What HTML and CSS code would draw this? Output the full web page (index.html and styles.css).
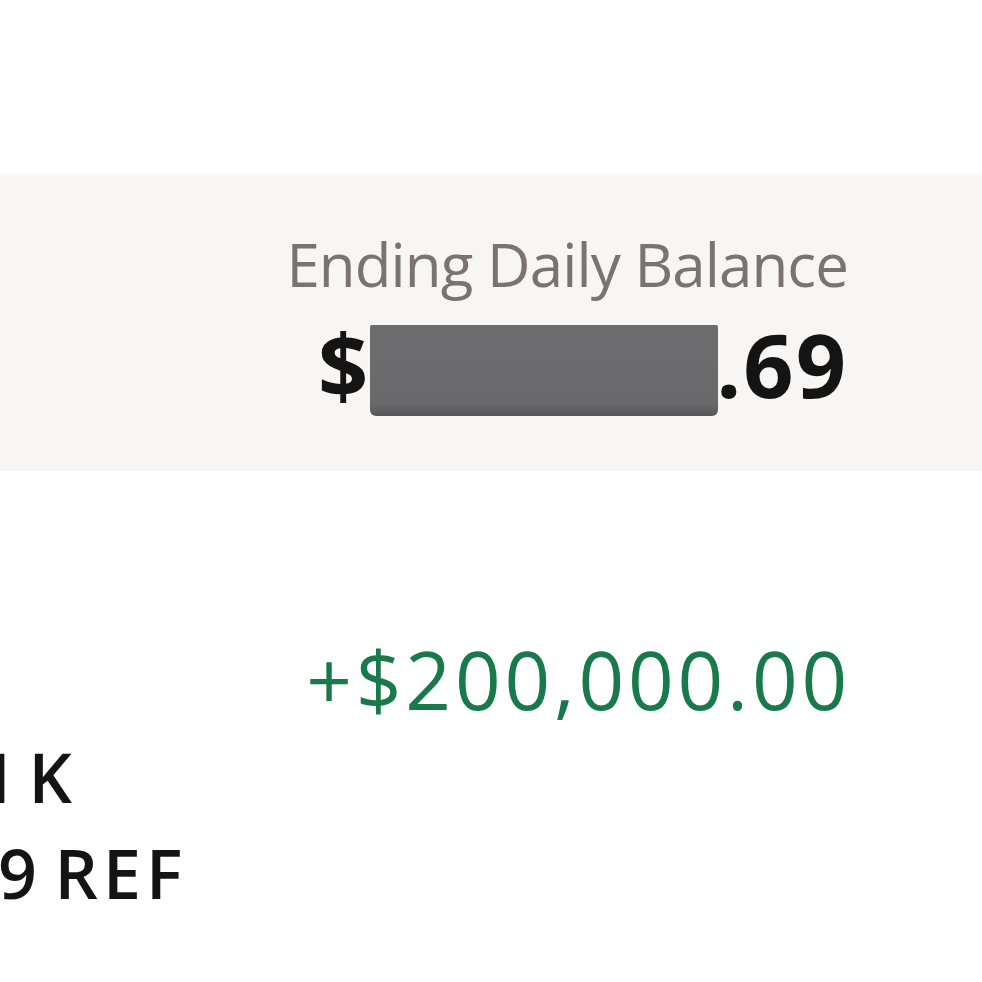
FILE: index.html
```html
<!DOCTYPE html>
<html>
<head>
<meta charset="utf-8">
<link rel="stylesheet" href="styles.css">
</head>
<body>
<div class="page">
  <div class="top-space"></div>
  <section class="balance-band">
    <div class="balance-label">Ending Daily Balance</div>
    <div class="balance-amount"><span class="cur">$</span><span class="redact"><span class="hidden-digits">0,000,000</span></span><span class="cents">.69</span></div>
  </section>
  <section class="txn">
    <div class="txn-amount">+$200,000.00</div>
    <div class="txn-desc">
      <div class="desc-line line1">I K</div>
      <div class="desc-line line2">9 REF</div>
    </div>
  </section>
</div>
</body>
</html>
```
FILE: styles.css
```css
html, body {
  margin: 0;
  padding: 0;
  background: #ffffff;
}
.page {
  width: 982px;
  height: 982px;
  overflow: hidden;
  font-family: "Open Sans", "Liberation Sans", sans-serif;
}
.top-space {
  height: 174px;
}
.balance-band {
  height: 297px;
  box-sizing: border-box;
  background: #f7f6f4;
  padding: 54px 134px 0 0;
  display: flex;
  flex-direction: column;
  align-items: flex-end;
}
.balance-label {
  font-size: 60px;
  line-height: 72px;
  color: #7a7371;
  font-weight: 400;
  letter-spacing: -0.9px;
}
.balance-amount {
  margin-top: 12px;
  font-size: 88px;
  line-height: 100px;
  font-weight: 700;
  color: #141414;
  display: flex;
  align-items: center;
  margin-right: 2px;
}
.cents {
  letter-spacing: 2px;
  margin-right: -2px;
}
.redact {
  display: inline-block;
  width: 348px;
  height: 91px;
  margin-top: 13px;
  margin-left: 2px;
  margin-right: -2px;
  background: linear-gradient(#6d6d6f, #6a6a6c 86%, #575759);
  border-radius: 2px 2px 6px 6px;
  position: relative;
  z-index: 1;
}
.hidden-digits {
  visibility: hidden;
}
.txn {
  display: flex;
  flex-direction: column;
}
.txn-amount {
  align-self: flex-end;
  margin-right: 131px;
  margin-top: 160px;
  font-size: 80px;
  line-height: 96px;
  color: #18794a;
  font-weight: 400;
  letter-spacing: 3.8px;
}
.txn-desc {
  margin-top: 2px;
}
.desc-line {
  font-size: 68px;
  line-height: 96px;
  font-weight: 600;
  color: #141414;
  white-space: nowrap;
  letter-spacing: 5px;
  word-spacing: -10px;
}
.line1 {
  margin-left: -10px;
}
.line2 {
  margin-left: -2px;
  word-spacing: -10px;
}
```
